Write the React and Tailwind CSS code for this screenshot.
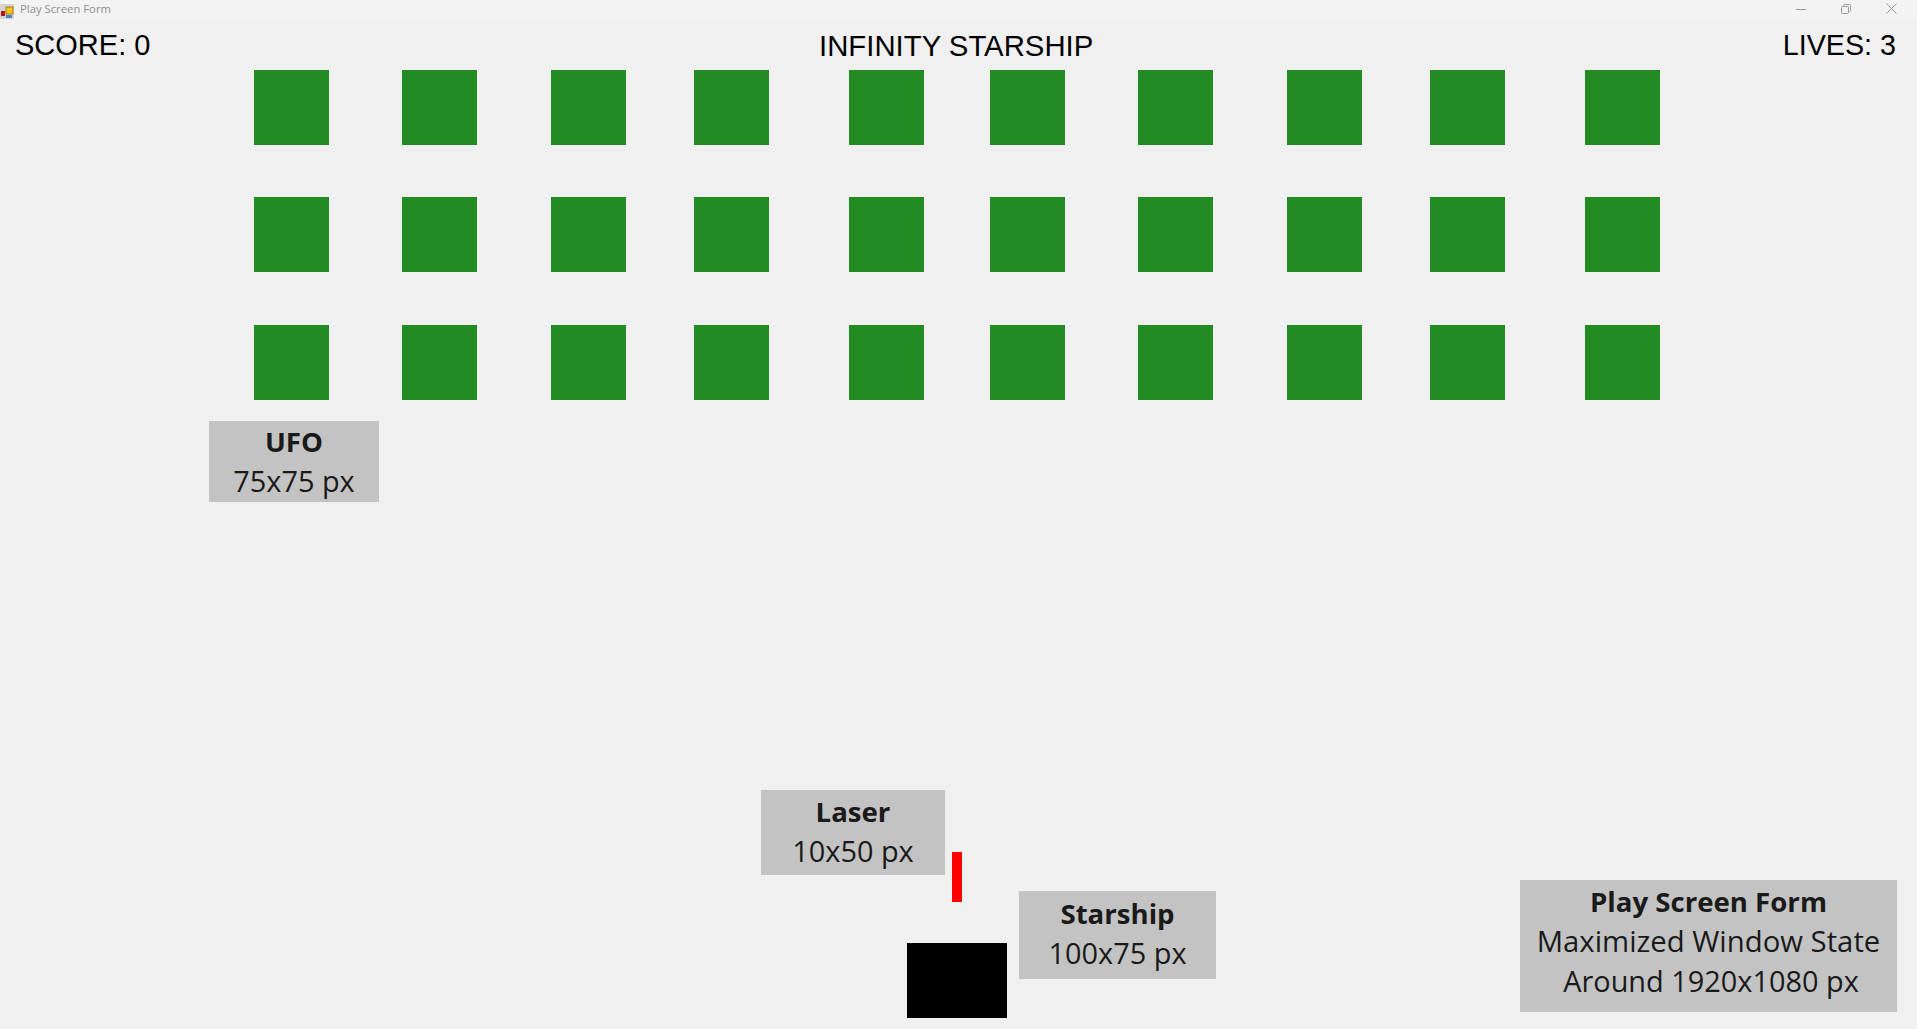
const rows = [0, 1, 2];
const cols = [0, 1, 2, 3, 4, 5, 6, 7, 8, 9];

function Label({ className, title, lines }) {
  return (
    <div className={`absolute flex flex-col items-center justify-center bg-[#c3c3c3] text-[#1a1a1a] text-[28.9px] leading-[40px] font-['Open_Sans',sans-serif] ${className}`}>
      <div className="text-[27.6px] font-bold">{title}</div>
      {lines.map((l, i) => (
        <div key={l} className={i === 1 ? "pl-[5px]" : lines.length > 1 ? "text-[29.3px]" : ""}>{l}</div>
      ))}
    </div>
  );
}

export default function App() {
  return (
    <div className="relative w-[1917px] h-[1029px] overflow-hidden bg-[#f0f0f0] font-['Liberation_Sans',Arial,sans-serif]">
      <div className="flex h-[21px] items-center justify-between bg-[#f3f3f3]">
        <div className="flex items-center">
          <svg width="14" height="15" viewBox="0 0 14 15" className="mt-[1px]">
            <rect x="0" y="0" width="14" height="15" fill="#d4d4d4" />
            <rect x="6" y="3" width="7" height="7" fill="#f5c518" stroke="#a87c10" />
            <rect x="1" y="7" width="4" height="5" fill="#b01818" />
            <rect x="6" y="11" width="6" height="3" fill="#4a7fd0" />
          </svg>
          <span className="ml-[6px] pb-[2px] text-[11.3px] text-[#8f8f8f] font-['Open_Sans',sans-serif]">Play Screen Form</span>
        </div>
        <div className="flex items-center gap-[35px] pr-[20px] pb-[4px]">
          <svg width="10" height="10" viewBox="0 0 10 10"><path d="M0 5.5H10" stroke="#9a9a9a" /></svg>
          <svg width="10" height="10" viewBox="0 0 10 10" fill="none" stroke="#9a9a9a"><rect x="0.5" y="2.5" width="7" height="7" rx="1" /><path d="M2.5 2.5V1.5a1 1 0 0 1 1-1h5a1 1 0 0 1 1 1v5a1 1 0 0 1-1 1h-1" /></svg>
          <svg width="11" height="11" viewBox="0 0 11 11"><path d="M0.5 0.5L10.5 10.5M10.5 0.5L0.5 10.5" stroke="#9a9a9a" /></svg>
        </div>
      </div>

      <div className="relative flex h-[49px] items-start justify-between pl-[15px] pr-[21px] pt-[8px] text-[29.33px] leading-[33px] text-black">
        <span className="text-[29px]">SCORE: 0</span>
        <span className="absolute left-[819px] top-[8px]">INFINITY STARSHIP</span>
        <span className="text-[28.7px]">LIVES: 3</span>
      </div>

      <div className="ml-[254px] grid grid-cols-[148px_149px_143px_155px_141px_148px_149px_143px_155px_75px] grid-rows-[127px_128px_75px]">
        {rows.map((r) =>
          cols.map((c) => <div key={`${r}-${c}`} className="h-[75px] w-[75px] bg-[#228b22]" />)
        )}
      </div>

      <Label className="left-[209px] top-[421px] h-[81px] w-[170px] pb-[2px]" title="UFO" lines={["75x75 px"]} />
      <Label className="left-[761px] top-[790px] h-[85px] w-[184px] pb-[4px]" title="Laser" lines={["10x50 px"]} />
      <Label className="left-[1019px] top-[891px] h-[88px] w-[197px] pb-[4px]" title="Starship" lines={["100x75 px"]} />
      <Label className="left-[1520px] top-[880px] h-[132px] w-[377px] pb-[10px]" title="Play Screen Form" lines={["Maximized Window State", "Around 1920x1080 px"]} />

      <div className="absolute left-[952px] top-[852px] h-[50px] w-[10px] bg-[#ff0000]" />
      <div className="absolute left-[907px] top-[943px] h-[75px] w-[100px] bg-black" />
    </div>
  );
}
